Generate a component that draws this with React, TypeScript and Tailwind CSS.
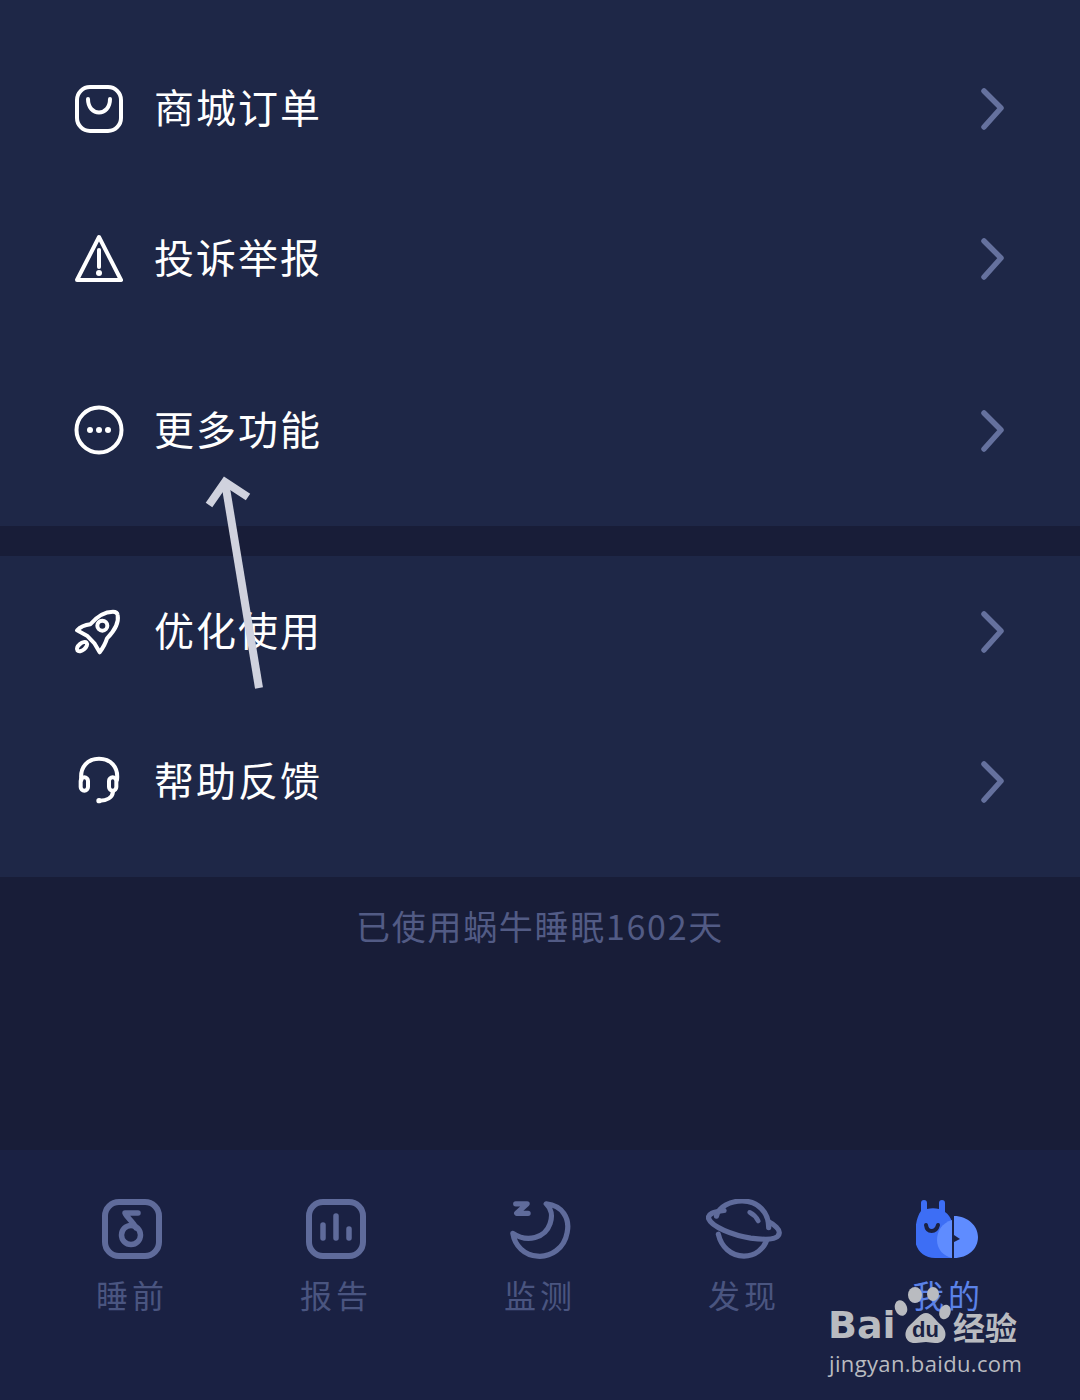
import React from "react";

const Chevron = () => (
  <svg width="30" height="44" viewBox="0 0 30 44" fill="none" className="shrink-0">
    <path d="M7 5 L24 22 L7 41" stroke="#65719e" strokeWidth="5.5" strokeLinecap="round" strokeLinejoin="round" />
  </svg>
);

const BagIcon = () => (
  <svg width="50" height="50" viewBox="0 -1 50 50" fill="none">
    <rect x="3" y="3" width="44" height="44" rx="13" stroke="#fff" strokeWidth="4" />
    <path d="M14 15 C14 33 36 33 36 15" stroke="#fff" strokeWidth="4" strokeLinecap="round" />
  </svg>
);

const WarnIcon = () => (
  <svg width="50" height="50" viewBox="0 -1 50 50" fill="none">
    <path d="M25 3 L47 46 H3 Z" stroke="#fff" strokeWidth="4" strokeLinejoin="round" />
    <path d="M25 16 V33" stroke="#fff" strokeWidth="4" strokeLinecap="round" />
    <circle cx="25" cy="39" r="3" fill="#fff" />
  </svg>
);

const MoreIcon = () => (
  <svg width="50" height="50" viewBox="0 0 50 50" fill="none">
    <circle cx="25" cy="25" r="22.5" stroke="#fff" strokeWidth="4" />
    <circle cx="16" cy="25" r="3" fill="#fff" />
    <circle cx="25" cy="25" r="3" fill="#fff" />
    <circle cx="34" cy="25" r="3" fill="#fff" />
  </svg>
);

const RocketIcon = () => (
  <svg width="50" height="50" viewBox="73 651 150 150" fill="none" stroke="#fff" strokeWidth="12" strokeLinejoin="round">
    <path d="M190 668 C165 668 142 682 122 706 C105 708 92 714 82 724 L112 740 L135 764 L150 790 C160 776 168 762 172 748 C195 725 208 700 204 678 C203 671 198 668 190 668 Z" />
    <circle cx="158" cy="710" r="15" />
    <ellipse cx="97" cy="773" rx="18" ry="10" transform="rotate(-40 97 773)" />
  </svg>
);

const HeadsetIcon = () => (
  <svg width="50" height="50" viewBox="43 78 150 150" fill="none" stroke="#fff" strokeWidth="12" strokeLinecap="round">
    <path d="M65 150 C60 110 85 86 118 86 C152 86 177 110 172 150" />
    <rect x="63" y="142" width="22" height="40" rx="11" />
    <rect x="148" y="142" width="22" height="40" rx="11" />
    <path d="M160 185 C158 203 142 212 120 212" />
    <circle cx="118" cy="212" r="8" fill="#fff" stroke="none" />
  </svg>
);

const MusicTab = () => (
  <svg width="64" height="64" viewBox="0 0 64 64" fill="none" stroke="#5f6b9b" strokeLinecap="round">
    <rect x="5" y="5" width="54" height="54" rx="14" strokeWidth="6" />
    <circle cx="31" cy="38" r="9.5" strokeWidth="5.5" />
    <path d="M38 16 H25 C27 21 33 24 36 31" strokeWidth="5.5" strokeLinejoin="round" />
  </svg>
);

const ChartTab = () => (
  <svg width="64" height="64" viewBox="0 0 64 64" fill="none" stroke="#5f6b9b" strokeLinecap="round">
    <rect x="5" y="5" width="54" height="54" rx="14" strokeWidth="6" />
    <path d="M19 28 V41 M32 19 V41 M45 32 V41" strokeWidth="5.5" />
  </svg>
);

const MoonTab = () => (
  <svg width="61" height="61" viewBox="0 0 64 64" fill="none" stroke="#5f6b9b" strokeLinecap="round" strokeLinejoin="round">
    <path d="M6 5 H18 L7 15 H19" strokeWidth="5.5" />
    <path d="M38 5 C55 7 63 20 60 35 C57 52 43 61 29 60 C15 59 5 49 3 36 C18 46 37 41 42 26 C45 17 44 11 38 5 Z" strokeWidth="5.5" />
  </svg>
);

const PlanetTab = () => (
  <svg width="76" height="61" viewBox="0 0 80 64" fill="none" stroke="#5f6b9b" strokeLinecap="round">
    <path d="M11 18 C13 8 26 2 38 2 C55 2 66 14 66 30" strokeWidth="5.5" />
    <path d="M13 37 C16 50 26 60 40 60 C52 60 61 52 64 43" strokeWidth="5.5" />
    <path d="M19 12 C8 13 1 16 3 21 C6 29 28 38 47 41 C62 43 76 43 77 36 C78 32 72 27 66 24" strokeWidth="5.5" />
    <path d="M46 14 C50 16 53 19 55 23" strokeWidth="5" />
  </svg>
);

const MineTab = () => (
  <svg width="64" height="60" viewBox="1 0 64 60" fill="none">
    <path d="M6 4 A3 3 0 0 1 12 4 V10 C16 9 20 9 24 10 V4 A3 3 0 0 1 30 4 V13 C33 15 36 19 37 23 V59 H20 C8 59 0 50 0 39 C0 27 2 17 6 12 Z" fill="#3d6ef5" />
    <path d="M37 21 C27 24 22 32 22 41 C22 50 28 57 37 59 Z" fill="#5f8cff" />
    <path d="M39 17 C53 17 63 27 63 38 C63 50 53 59 39 59 V43 L45 40 L39 36 Z" fill="#5f8cff" />
    <path d="M11 26 C12 34 21 34 23 26" stroke="#1a2143" strokeWidth="4" strokeLinecap="round" />
  </svg>
);

const rowsA = [
  { label: "商城订单", icon: <BagIcon /> },
  { label: "投诉举报", icon: <WarnIcon /> },
];

const rowsB = [
  { label: "优化使用", icon: <RocketIcon /> },
  { label: "帮助反馈", icon: <HeadsetIcon /> },
];

const Row = ({ label, icon }: { label: string; icon: React.ReactNode }) => (
  <div className="h-[150px] flex items-center pl-[74px] pr-[73px]">
    <div className="w-[50px] h-[50px] shrink-0">{icon}</div>
    <span className="ml-[30px] pb-[4px] flex-1 text-[40px] tracking-[2px] text-white leading-none">{label}</span>
    <Chevron />
  </div>
);

const tabs = [
  { label: "睡前", icon: <MusicTab /> },
  { label: "报告", icon: <ChartTab /> },
  { label: "监测", icon: <MoonTab /> },
  { label: "发现", icon: <PlanetTab /> },
  { label: "我的", icon: <MineTab />, active: true },
];

const BaiduMark = () => (
  <div className="absolute left-[830px] top-[1287px] w-[196px] text-[#b9bbc0]">
    <div className="flex items-end h-[57px]">
      <span className="w-[64px] -ml-[2px] -mb-[3px] text-[38px] font-bold leading-[44px] font-['DejaVu_Sans',sans-serif]">Bai</span>
      <div className="relative ml-[2px] w-[58px] h-[57px] shrink-0">
        <svg width="58" height="57" viewBox="0 0 58 57" fill="#b9bbc0">
          <ellipse cx="7" cy="21" rx="6" ry="8" transform="rotate(-20 7 21)" />
          <ellipse cx="21" cy="8" rx="7" ry="8" />
          <ellipse cx="39" cy="7" rx="6" ry="7" />
          <ellipse cx="51" cy="25" rx="5.5" ry="7.5" transform="rotate(20 51 25)" />
          <path d="M32 26 C38 26 41 33 47 38 C55 45 52 57 41 56 C37 56 35 55 32 55 C28 55 26 56 22 56 C11 57 8 45 16 38 C22 33 26 26 32 26 Z" />
        </svg>
        <span className="absolute left-[18px] top-[32px] text-[22px] font-bold leading-[22px] text-[#1a2143] font-['Liberation_Sans',sans-serif]">du</span>
      </div>
      <span className="ml-[1px] -mb-[1px] text-[32px] font-bold leading-[38px] whitespace-nowrap">经验</span>
    </div>
    <div className="mt-[5px] -ml-[1px] text-[22px] leading-[28px] tracking-[0.35px] whitespace-nowrap font-['Open_Sans',sans-serif]">jingyan.baidu.com</div>
  </div>
);

export default function App() {
  return (
    <div className="relative w-[1080px] h-[1400px] overflow-hidden bg-[#181d38] font-['Noto_Sans_CJK_SC','Noto_Sans',sans-serif]">
      <section className="h-[526px] pt-[33px] bg-[#1e2747]">
        {rowsA.map((r) => (
          <Row key={r.label} label={r.label} icon={r.icon} />
        ))}
        <div className="mt-[22px]">
          <Row label="更多功能" icon={<MoreIcon />} />
        </div>
      </section>

      <section className="mt-[30px] h-[321px] bg-[#1e2747]">
        {rowsB.map((r) => (
          <Row key={r.label} label={r.label} icon={r.icon} />
        ))}
      </section>

      <div className="h-[273px] pt-[25px] text-center text-[34px] leading-[48px] tracking-[1.7px] text-[#525b85]">
        已使用蜗牛睡眠1602天
      </div>

      <nav className="h-[250px] bg-[#1a2143] px-[30px] pt-[47px] grid grid-cols-5">
        {tabs.map((t) => (
          <div key={t.label} className="flex flex-col items-center">
            <div className="h-[64px] flex items-center justify-center">{t.icon}</div>
            <span className={`mt-[13px] text-[32px] leading-[40px] tracking-[4px] ${t.active ? "text-[#5b82e8]" : "text-[#4a5580]"}`}>
              {t.label}
            </span>
          </div>
        ))}
      </nav>

      {/* annotation arrow over the list */}
      <svg className="absolute left-[200px] top-[470px]" width="70" height="225" viewBox="200 470 70 225" fill="none" stroke="#d0d2de" strokeWidth="8">
        <path d="M259 688 L225 482" />
        <path d="M209 505 L225 482 L248 497" />
      </svg>

      <BaiduMark />
    </div>
  );
}
